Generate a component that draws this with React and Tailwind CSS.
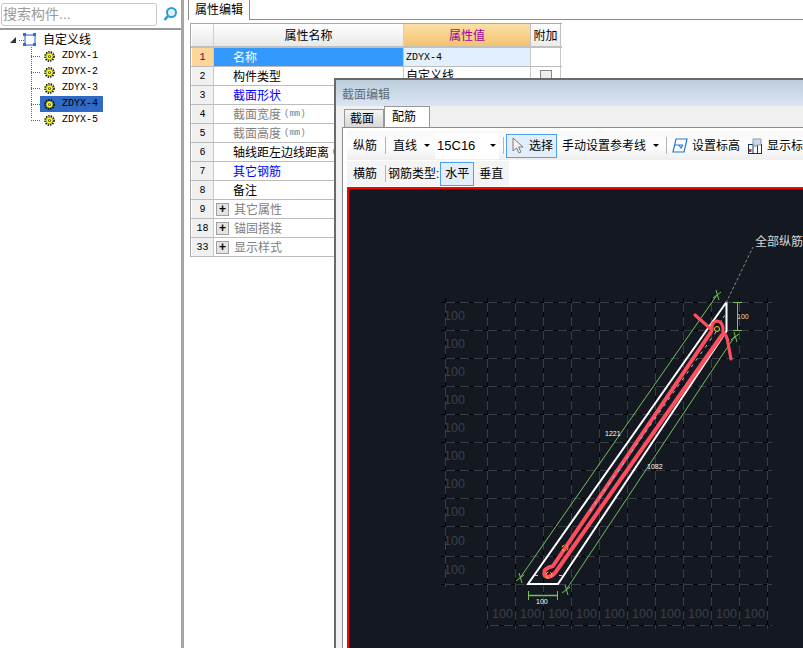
import React from 'react'

const cjk = { fontFamily: '"Liberation Sans", "Noto Sans CJK SC", sans-serif' }
const mono = { fontFamily: '"Liberation Mono", monospace' }

const treeItems = ['ZDYX-1', 'ZDYX-2', 'ZDYX-3', 'ZDYX-4', 'ZDYX-5']

const rows = [
  { no: '1', name: '名称', value: 'ZDYX-4', selected: true },
  { no: '2', name: '构件类型', value: '自定义线', check: true },
  { no: '3', name: '截面形状', color: 'text-[#0000ff]' },
  { no: '4', name: '截面宽度', unit: '(mm)', color: 'text-[#808080]' },
  { no: '5', name: '截面高度', unit: '(mm)', color: 'text-[#808080]' },
  { no: '6', name: '轴线距左边线距离', unit: '(mm)' },
  { no: '7', name: '其它钢筋', color: 'text-[#0000ff]' },
  { no: '8', name: '备注' },
  { no: '9', name: '其它属性', color: 'text-[#808080]', group: true },
  { no: '18', name: '锚固搭接', color: 'text-[#808080]', group: true },
  { no: '33', name: '显示样式', color: 'text-[#808080]', group: true }
]

const GearIcon = () => (
  <svg width="11" height="11" viewBox="0 0 12 12" className="shrink-0">
    <circle cx="6" cy="6" r="5" fill="none" stroke="#000" strokeWidth="1.6" strokeDasharray="1.6 1.1" />
    <circle cx="6" cy="6" r="3.8" fill="#ffff00" stroke="#222" strokeWidth="0.5" />
    <circle cx="6" cy="6" r="1.5" fill="#333" />
    <circle cx="6" cy="6" r="0.7" fill="#ffff00" />
  </svg>
)

const Caret = ({ className = '' }) => (
  <span className={`inline-block shrink-0 w-0 h-0 border-x-[3px] border-x-transparent border-t-[3px] border-t-black ${className}`} />
)

const Sep = ({ className = '' }) => <span className={`w-px h-[17px] bg-[#b4b4b4] shrink-0 ${className}`} />

const Tree = () => (
  <div className="relative pt-[2px] text-black" style={cjk}>
    <div className="flex items-center h-[16px]">
      <span className="ml-[10px] w-0 h-0 border-l-[6px] border-l-transparent border-b-[6px] border-b-[#333]" />
      <span className="ml-[3px] w-[5px] border-t border-dotted border-[#666]" />
      <svg width="14" height="14" viewBox="0 0 14 14" className="ml-[-1px] shrink-0">
        <rect x="2" y="2" width="10" height="10" fill="#fff" stroke="#1f5fc0" />
        {[[0, 0], [10, 0], [0, 10], [10, 10]].map(([x, y]) => (
          <rect key={`${x}-${y}`} x={x} y={y} width="3" height="3" fill="#2a6fd8" />
        ))}
      </svg>
      <span className="ml-[6px] text-[12px] leading-none">自定义线</span>
    </div>
    {/* 树的虚线 */}
    <div className="absolute left-[31px] top-[17px] h-[71px] border-l border-dotted border-[#666]" />
    {treeItems.map((item) => (
      <div key={item} className="flex items-center h-[16px] ml-[31px]">
        <span className="w-[9px] border-t border-dotted border-[#666]" />
        <span className={`flex items-center h-[16px] w-[63px] ${item === 'ZDYX-4' ? 'bg-[#316ac5]' : ''}`}>
          <span className="ml-[4px]"><GearIcon /></span>
          <span className="ml-[7px] text-[10px] leading-none" style={mono}>{item}</span>
        </span>
      </div>
    ))}
  </div>
)

const PropertyTable = () => (
  <div className="ml-[2px] mt-[3px] w-[372px] border-t border-l border-[#a8a8a8] text-[12px]" style={cjk}>
    <div className="flex h-[24px] border-b-2 border-[#c0c0c0]">
      <div className="w-[22px] ml-px border-r border-[#d0d0d0] bg-gradient-to-b from-white to-[#e8e8e8]" />
      <div className="w-[190px] pt-[2px] flex items-center justify-center border-r border-[#d0d0d0] bg-gradient-to-b from-white to-[#e8e8e8]">属性名称</div>
      <div className="w-[127px] pt-[2px] flex items-center justify-center border-r border-[#c0c0c0] bg-gradient-to-b from-[#fbdfa8] to-[#f3c36d] text-[#a000a0]">属性值</div>
      <div className="w-[30px] pt-[2px] flex items-center justify-center border-r border-[#c0c0c0] bg-gradient-to-b from-white to-[#ececec]">附加</div>
    </div>
    {rows.map((r) => (
      <div key={r.no} className="flex h-[19px] border-b border-[#bcbcbc]">
        <div className={`w-[22px] ml-px flex items-center justify-center border-r border-[#c8c8c8] text-[10px] ${r.selected ? 'bg-[#fdd698] text-[#600060]' : 'bg-[#f0f0f0] text-black'}`} style={mono}>
          {r.no}
        </div>
        <div className={`w-[190px] pt-[2px] flex items-center border-r border-[#c8c8c8] whitespace-nowrap overflow-hidden ${r.selected ? 'bg-[#3399ff] text-white' : r.color || 'text-black'} ${r.group ? 'pl-[2px]' : 'pl-[19px]'}`}>
          {r.group && (
            <span className="w-[13px] h-[13px] mt-[-2px] mr-[5px] flex items-center justify-center border border-[#a0a0a0] bg-[#e4e4e4] text-black text-[12px] leading-none font-bold">+</span>
          )}
          {r.name}
          {r.unit && <span className="ml-[3px] text-[9px]" style={mono}>{r.unit}</span>}
        </div>
        {!r.group && (
          <>
            <div className={`w-[127px] flex items-center pl-[2px] border-r border-[#c8c8c8] ${r.selected ? 'bg-[#e2f0fd]' : ''}`}>
              <span className={r.selected ? 'text-[10px]' : ''} style={r.selected ? mono : undefined}>{r.value}</span>
            </div>
            <div className="w-[30px] flex items-center justify-center border-r border-[#c8c8c8]">
              {r.check && <span className="w-[12px] h-[12px] border border-[#888] bg-[#eee]" />}
            </div>
          </>
        )}
      </div>
    ))}
  </div>
)

const gridX = [487, 515, 543, 571, 599, 627, 655, 683, 711, 739, 767]
const gridY = [301, 329, 357, 385, 413, 441, 469, 497, 525, 555, 583]
const leftLabels = [315, 343, 371, 399, 427, 455, 483, 511, 540, 569]
const dimGreen = '#78c05a'

const GridLine = ({ x1, y1, x2, y2 }) => (
  <g>
    <line x1={x1} y1={y1} x2={x2} y2={y2} stroke="#363d47" />
    <line x1={x1} y1={y1} x2={x2} y2={y2} stroke="#000" strokeDasharray="5 9" />
  </g>
)

const Tick = ({ x, y }) => (
  <g stroke={dimGreen}>
    <line x1={x - 4} y1={y + 3} x2={x + 4} y2={y - 3} />
    <line x1={x - 1} y1={y - 5} x2={x + 2} y2={y + 5} />
  </g>
)

const Drawing = () => (
  <svg width="454" height="460" viewBox="349 188 454 460" className="block">
    {/* 网格 */}
    <g shapeRendering="crispEdges">
      {gridY.map((y) => <GridLine key={y} x1={441} y1={y + 0.5} x2={772} y2={y + 0.5} />)}
      <GridLine x1={485} y1={624.5} x2={772} y2={624.5} />
      <GridLine x1={445.5} y1={297} x2={445.5} y2={586} />
      {gridX.map((x) => <GridLine key={x} x1={x + 0.5} y1={297} x2={x + 0.5} y2={628} />)}
    </g>
    <g fill="#3a404a" fontSize="12.5" fontFamily="Liberation Sans, sans-serif">
      {leftLabels.map((y) => <text key={y} x="444" y={y + 4}>100</text>)}
      {gridX.slice(0, 10).map((x) => <text key={x} x={x + 5} y="617">100</text>)}
    </g>
    {/* 截面轮廓 */}
    <path d="M726.5 301 V330 L558 583 H528 L726.5 301" fill="none" stroke="#fff" strokeWidth="2" />
    {/* 标注 */}
    <g stroke={dimGreen} fill="none">
      <line x1="520" y1="577" x2="717" y2="294" />
      <line x1="566" y1="589" x2="735" y2="335" />
      <line x1="737.5" y1="301" x2="737.5" y2="329" />
      <line x1="528" y1="594.5" x2="558" y2="594.5" strokeWidth="1.5" />
    </g>
    <Tick x={520} y={577} />
    <Tick x={717} y={294} />
    <Tick x={566} y={589} />
    <Tick x={735} y={336} />
    <g stroke={dimGreen}>
      <line x1="733" y1="301.5" x2="742" y2="301.5" />
      <line x1="733" y1="329.5" x2="742" y2="329.5" />
      <line x1="528.5" y1="590" x2="528.5" y2="599" />
      <line x1="557.5" y1="590" x2="557.5" y2="599" />
    </g>
    <g fontSize="7" fontFamily="Liberation Sans, sans-serif" fill="#fff">
      <text x="605" y="435">1221</text>
      <text x="647" y="468">1082</text>
      <text x="737" y="318" fill="#f1d9a0">100</text>
      <text x="536" y="603">100</text>
    </g>
    {/* 引出线 */}
    <line x1="726" y1="302" x2="753" y2="246" stroke="#888" strokeDasharray="3 2" />
    <text x="755" y="245" fontSize="12" fill="#d8d8d8" fontFamily="Noto Sans CJK SC, sans-serif">全部纵筋</text>
    {/* 配筋 */}
    <line x1="535" y1="574.5" x2="566" y2="574.5" stroke="#8ecbf0" strokeDasharray="3 5" />
    <path d="M711 331 L553 565 Q548 566 545 569 Q543 574 547 576 Q551 576 555 572 L722 334" fill="none" stroke="#ff4d5e" strokeWidth="4" strokeLinecap="round" strokeLinejoin="round" />
    <path d="M590 510 L716 331" fill="none" stroke="#8ecbf0" strokeDasharray="3 5" />
    <line x1="720" y1="322" x2="725" y2="314" stroke="#8ecbf0" strokeDasharray="3 3" />
    <path d="M695 314 L712 329 Q711 321 717 320 Q724 321 723 331 Q727 334 728 342 L731 358" fill="none" stroke="#ff4d5e" strokeWidth="3.2" strokeLinecap="round" strokeLinejoin="round" />
    <circle cx="717" cy="328" r="2.5" fill="none" stroke="#e6d020" />
    <circle cx="549" cy="574" r="3" fill="none" stroke="#e6d020" strokeDasharray="3 2" />
    <circle cx="565" cy="547" r="3" fill="none" stroke="#e6d020" strokeDasharray="3 2" />
  </svg>
)

const Dialog = () => (
  <div className="absolute left-[334px] top-[78px] w-[469px] h-[570px] border-t-2 border-l-2 border-[#6a6a6a] bg-[#f0f0f0] overflow-hidden" style={cjk}>
    <div className="h-[26px] flex items-center pl-[6px] pt-[4px] bg-gradient-to-b from-[#bccddb] to-[#dbe6f2] text-[12px] text-[#5f6b78]">截面编辑</div>
    {/* 标签页 */}
    <div className="flex items-end h-[21px] pl-[8px] text-[12px]">
      <div className="w-[40px] h-[18px] flex items-center pl-[5px] border border-b-0 border-[#999] bg-gradient-to-b from-[#f4f4f4] to-[#d8d8d8]">截面</div>
      <div className="w-[46px] h-[21px] flex items-center pl-[7px] border border-b-0 border-[#999] bg-white">配筋</div>
    </div>
    <div className="ml-[6px] h-[521px] border-t border-l border-[#8c8c8c] bg-white pl-[4px] pt-[3px] text-[12px]">
      <div className="flex items-center h-[29px] pl-[6px] min-w-max bg-gradient-to-b from-[#f8f8f8] via-white to-[#eeeeee] whitespace-nowrap">
        <span>纵筋</span>
        <Sep className="ml-[8px]" />
        <span className="ml-[7px]">直线</span>
        <Caret className="ml-[7px]" />
        <span className="ml-[5px] w-[64px] h-[26px] shrink-0 flex items-center justify-between pl-[2px] pr-[3px] bg-white text-[13px]">
          15C16
          <Caret />
        </span>
        <Sep className="ml-[4px]" />
        <span className="ml-[2px] w-[51px] h-[24px] shrink-0 flex items-center border border-[#4da0ef] bg-[#e2eef9]">
          <svg width="14" height="17" viewBox="0 0 14 17" className="ml-[4px]">
            <path d="M2 1 L2 14 L5.5 11 L8 16 L10 15 L7.5 10 L12 10 Z" fill="#f4f4f4" stroke="#7a7a7a" />
          </svg>
          <span className="ml-[4px]">选择</span>
        </span>
        <span className="ml-[5px]">手动设置参考线</span>
        <Caret className="ml-[7px]" />
        <Sep className="ml-[7px]" />
        <svg width="16" height="15" viewBox="0 0 16 15" className="ml-[5px] shrink-0">
          <path d="M4 1 H15 L12 14 H1 Z" fill="none" stroke="#1f7ad0" strokeWidth="1.2" />
          <path d="M3 7 H11 M7 7 L9 10 L11 7" fill="none" stroke="#1f7ad0" strokeWidth="1.2" />
        </svg>
        <span className="ml-[4px]">设置标高</span>
        <svg width="15" height="16" viewBox="0 0 15 16" className="ml-[8px] shrink-0">
          <rect x="0.5" y="6.5" width="13" height="9" fill="#fff" stroke="#16345c" />
          <path d="M5 7 V15 M9.5 5 V15" stroke="#16345c" />
          <rect x="1" y="11" width="2.5" height="3" fill="#e03020" />
          <path d="M5 1 H13 V7 H9 L7 9 V7 H5 Z" fill="#cfd8e8" stroke="#8a9ab0" />
        </svg>
        <span className="ml-[4px]">显示标高</span>
      </div>
      <div className="flex items-center h-[25px] mt-px w-[162px] pl-[6px] bg-[#f4f4f4] whitespace-nowrap">
        <span>横筋</span>
        <Sep className="ml-[8px]" />
        <span className="ml-[2px] mr-px">钢筋类型:</span>
        <span className="w-[34px] h-[24px] shrink-0 flex items-center justify-center border border-[#4da0ef] bg-[#e2eef9]">水平</span>
        <span className="ml-[5px]">垂直</span>
      </div>
      <div className="mt-px border-t-2 border-l-2 border-[#ff0000] bg-[#141820] h-[462px] overflow-hidden">
        <Drawing />
      </div>
    </div>
  </div>
)

const App = () => {
  return (
    <div className="relative flex w-[803px] h-[648px] bg-white overflow-hidden" style={cjk}>
      {/* 构件列表 */}
      <aside className="w-[184px] h-full shrink-0 border-r-[3px] border-[#a6a6a6]">
        <div className="flex items-center h-[30px] pl-px border-b-2 border-[#9a9a9a] bg-white">
          <div className="w-[156px] h-[23px] flex items-center pl-px border border-[#c8c8c8] rounded-[3px] bg-white text-[14px] text-[#9a9a9a]">搜索构件...</div>
          <svg width="16" height="16" viewBox="0 0 16 16" className="ml-[5px]">
            <circle cx="9.5" cy="6.5" r="4.5" fill="#dff1fb" stroke="#2f9ad8" strokeWidth="2" />
            <path d="M6 10 L2.5 14" stroke="#2f9ad8" strokeWidth="2.6" />
          </svg>
        </div>
        <Tree />
      </aside>
      {/* 属性编辑 */}
      <main className="flex-1 min-w-0 pl-[4px]">
        <div className="flex h-[20px] border-b border-[#8c8c8c]">
          <div className="w-[62px] h-[20px] flex items-center justify-center border-r border-l border-[#8c8c8c] bg-white text-[12px]">属性编辑</div>
        </div>
        <PropertyTable />
      </main>
      <Dialog />
    </div>
  )
}

export default App
